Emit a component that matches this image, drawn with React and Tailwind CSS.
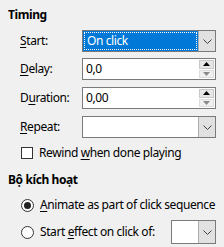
import React from "react";

const Chevron = () => (
  <svg width="9" height="5" viewBox="0 0 9 5" className="block">
    <path d="M0.5 0.5 L4.5 4.5 L8.5 0.5" fill="none" stroke="#404040" strokeWidth="1" />
  </svg>
);

const DropBtn = () => (
  <div className="w-[17px] h-full flex items-center justify-center bg-[#e1e1e1] border-l border-[#adadad]">
    <Chevron />
  </div>
);

const U = ({ children }) => <span className="underline underline-offset-2">{children}</span>;

const Label = ({ children }) => <div className="w-[74px] pl-3">{children}</div>;

const Spin = ({ value }) => (
  <div className="flex-1 h-full flex bg-white border border-[#7a7a7a]">
    <div className="flex-1 pl-[3px] flex items-center">{value}</div>
    <div className="w-[16px] flex flex-col py-[1px] pr-[1px] gap-[1px]">
      <div className="flex-1 flex items-center justify-center bg-[#e6e6e6] border border-[#c8c8c8]">
        <svg width="7" height="4" viewBox="0 0 7 4"><path d="M0 4 L3.5 0 L7 4 Z" fill="#000" /></svg>
      </div>
      <div className="flex-1 flex items-center justify-center bg-[#f0f0f0] border border-[#dcdcdc]">
        <svg width="7" height="4" viewBox="0 0 7 4"><path d="M0 0 L3.5 4 L7 0 Z" fill="#8a8a8a" /></svg>
      </div>
    </div>
  </div>
);

export default function App() {
  return (
    <div
      className="w-[224px] h-[247px] bg-[#f0f0f0] text-[12px] tracking-[-0.4px] text-black overflow-hidden pl-2 pr-2"
      style={{ fontFamily: '"Noto Sans", "Open Sans", sans-serif' }}
    >
      <div className="pt-[5px] h-[25px] flex items-center font-bold">Timing</div>

      <div className="mt-[5px] h-[22px] flex items-center">
        <Label><U>S</U>tart:</Label>
        <div className="flex-1 h-full flex border border-[#7a7a7a] bg-[#0078d7]">
          <div className="flex-1 m-[1px] border border-dotted border-black outline outline-1 outline-dotted outline-white -outline-offset-1 flex items-center pl-[2px] text-white">
            On click
          </div>
          <DropBtn />
        </div>
      </div>

      <div className="mt-[6px] h-[22px] flex items-center">
        <Label><U>D</U>elay:</Label>
        <Spin value="0,0" />
      </div>

      <div className="mt-[7px] h-[22px] flex items-center">
        <Label>D<U>u</U>ration:</Label>
        <Spin value="0,00" />
      </div>

      <div className="mt-[7px] h-[22px] flex items-center">
        <Label><U>R</U>epeat:</Label>
        <div className="flex-1 h-full flex border border-[#7a7a7a] bg-white">
          <div className="flex-1" />
          <DropBtn />
        </div>
      </div>

      <div className="mt-[7px] h-[16px] flex items-center pl-[13px] gap-[6px]">
        <div className="w-[12px] h-[12px] bg-white border border-[#333]" />
        <div>Rewind <U>w</U>hen done playing</div>
      </div>

      <div className="mt-[9px] h-[20px] flex items-center font-bold">Bộ kích hoạt</div>

      <div className="mt-[7px] h-[16px] flex items-center pl-[13px] gap-[6px]">
        <div className="shrink-0 w-[13px] h-[13px] rounded-full bg-white border border-[#333] flex items-center justify-center">
          <div className="w-[7px] h-[7px] rounded-full bg-[#222]" />
        </div>
        <div className="whitespace-nowrap"><U>A</U>nimate as part of click sequence</div>
      </div>

      <div className="mt-[7px] h-[24px] flex items-center pl-[13px] gap-[6px]">
        <div className="shrink-0 w-[13px] h-[13px] rounded-full bg-white border border-[#333]" />
        <div className="flex-1 whitespace-nowrap">Start <U>e</U>ffect on click of:</div>
        <div className="w-[45px] h-full flex border border-[#7a7a7a] bg-white">
          <div className="flex-1" />
          <DropBtn />
        </div>
      </div>
    </div>
  );
}
